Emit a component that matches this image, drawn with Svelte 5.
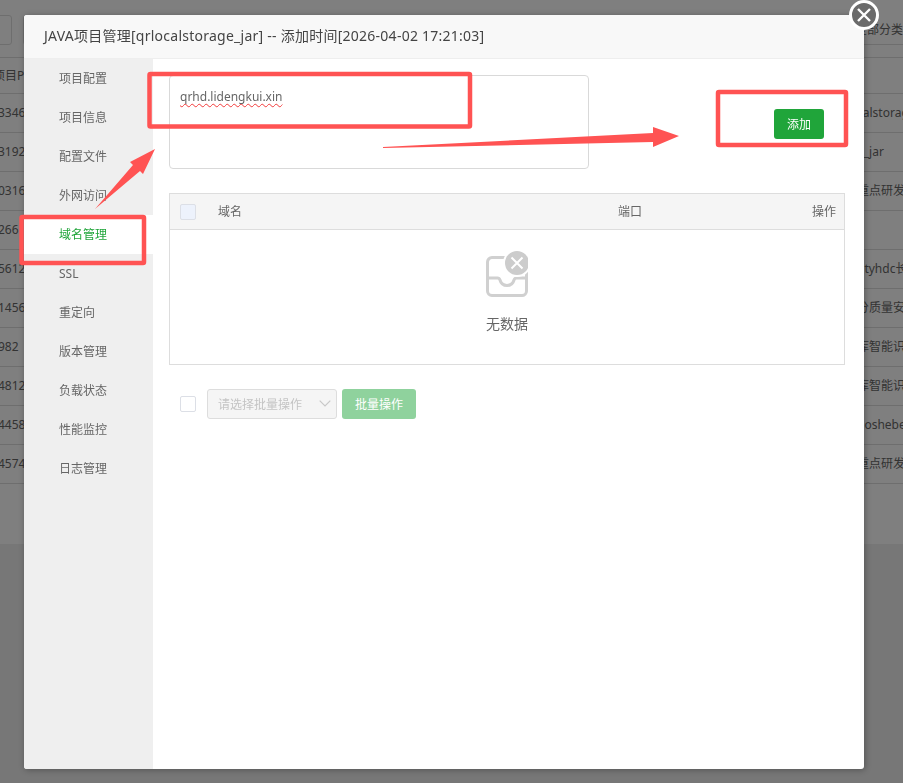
<script>
  const tabs = ["项目配置", "项目信息", "配置文件", "外网访问", "域名管理", "SSL", "重定向", "版本管理", "负载状态", "性能监控", "日志管理"];
  const activeTab = "域名管理";

  // table behind the modal, only the edges show
  const rows = [
    { pid: "项目PID", name: "", head: true },
    { pid: "3346", name: "calstorage_jar" },
    { pid: "3192", name: "e_jar" },
    { pid: "0316", name: "重点研发计划" },
    { pid: "266", name: "" },
    { pid: "5612", name: "htyhdc长治" },
    { pid: "1456", name: "分质量安全" },
    { pid: "982", name: "库智能识别" },
    { pid: "4812", name: "库智能识别" },
    { pid: "4458", name: "boshebei" },
    { pid: "4574", name: "重点研发计划" },
  ];
</script>

<div class="page">
  <div class="toolbar">
    <div class="tool-left">
      <span class="tool-box first"></span>
      <span class="tool-box"></span>
    </div>
    <div class="tool-right">全部分类</div>
  </div>

  <div class="bg-table">
    {#each rows as row}
      <div class="bg-row" class:head={row.head}>
        <span class="bg-pid" class:shift={row.head}>{row.pid}</span>
        <span class="bg-name">{row.name}</span>
      </div>
    {/each}
  </div>
  <div class="bg-pager"></div>
  <div class="bg-foot"></div>
</div>

<div class="shade"></div>

<div class="modal">
  <div class="modal-title">JAVA项目管理[qrlocalstorage_jar] -- 添加时间[2026-04-02 17:21:03]</div>
  <div class="modal-body">
    <nav class="side">
      {#each tabs as tab}
        <div class="side-item" class:active={tab === activeTab}>{tab}</div>
      {/each}
    </nav>

    <main class="content">
      <div class="add-row">
        <div class="domain-input"><span class="typed">qrhd.lidengkui.xin</span></div>
        <button class="btn add-btn">添加</button>
      </div>

      <div class="table">
        <div class="table-head">
          <span class="check disabled"></span>
          <span class="col-domain">域名</span>
          <span class="col-port">端口</span>
          <span class="col-op">操作</span>
        </div>
        <div class="empty">
          <svg class="empty-icon" width="42" height="46" viewBox="0 0 42 46" aria-hidden="true">
            <path d="M28 6.500H6a4.500 4.500 0 0 0-4.500 4.500V40a4.500 4.500 0 0 0 4.500 4.500h30a4.500 4.500 0 0 0 4.500-4.500V20" fill="none" stroke="#d0d0d0" stroke-width="3"/>
            <path d="M1.500 27h10c1.500 0 2 .6 2.500 2 .8 3 3.500 5.500 7 5.500s6.200-2.500 7-5.500c.5-1.400 1-2 2.500-2h10" fill="none" stroke="#d0d0d0" stroke-width="3"/>
            <circle cx="31" cy="12" r="14" fill="#fff"/>
            <circle cx="31" cy="12" r="12" fill="#cccccc"/>
            <path d="M25.500 6.500l11 11M36.500 6.500l-11 11" stroke="#fff" stroke-width="2" fill="none"/>
          </svg>
          <div class="empty-text">无数据</div>
        </div>
      </div>

      <div class="batch">
        <span class="check"></span>
        <div class="batch-select">
          <span>请选择批量操作</span>
          <svg class="chevron" width="12" height="7" viewBox="0 0 12 7" aria-hidden="true">
            <path d="M.7.7l5.300 5.300 5.300-5.300" fill="none" stroke="#c8c8c8" stroke-width="1.200"/>
          </svg>
        </div>
        <button class="btn batch-btn">批量操作</button>
      </div>
    </main>
  </div>
</div>

<button class="close" aria-label="关闭">
  <svg width="16" height="16" viewBox="0 0 16 16" aria-hidden="true">
    <path d="M2 2l12 12M14 2L2 14" stroke="#fff" stroke-width="2.400" fill="none"/>
  </svg>
</button>

<!-- red annotations drawn on top of the screenshot -->
<svg class="marks" width="903" height="783" viewBox="0 0 903 783" aria-hidden="true">
  <g fill="none" stroke="#ff5353" stroke-width="4.500" stroke-linejoin="round">
    <rect x="149.500" y="74" width="320.500" height="52.500" rx="1"/>
    <rect x="718" y="92" width="128" height="53" rx="1"/>
    <rect x="21.500" y="217" width="122.500" height="46" rx="1"/>
  </g>
  <g fill="#ff5353">
    <polygon points="95,209 133,165 130,162 155,149 143,174 140,171"/>
    <polygon points="383,147 653,133 653,127 679,136 653,147 653,142 383,148"/>
  </g>
</svg>

<style>
  :global(body) {
    margin: 0;
    background: #fff;
    font-family: "Noto Sans", "Noto Sans CJK SC", sans-serif;
    overflow: hidden;
  }

  /* page behind the modal */
  .page {
    height: 783px;
    overflow: hidden;
    display: flex;
    flex-direction: column;
    color: #666;
    font-size: 12px;
  }
  .toolbar {
    display: flex;
    justify-content: space-between;
    height: 30px;
    margin-top: 15px;
    flex-shrink: 0;
  }
  .tool-left {
    display: flex;
    gap: 11px;
    margin-left: -20px;
  }
  .tool-box {
    width: 30px;
    height: 28px;
    border: 1px solid #ddd;
    border-radius: 3px;
  }
  .tool-right {
    width: 48px;
    line-height: 30px;
    white-space: nowrap;
    overflow: hidden;
    border-bottom: 1px solid #ddd;
    box-sizing: border-box;
  }
  .bg-table {
    margin-top: 12px;
    border-top: 1px solid #ddd;
    flex-shrink: 0;
  }
  .bg-row {
    display: flex;
    justify-content: space-between;
    height: 38px;
    line-height: 38px;
    border-bottom: 1px solid #ddd;
    white-space: nowrap;
  }
  .bg-row.head {
    height: 35px;
    line-height: 35px;
  }
  .bg-pid {
    width: 40px;
    margin-left: -2px;
  }
  .bg-pid.shift {
    margin-left: -7px;
  }
  .bg-name {
    width: 46px;
    overflow: hidden;
  }
  .bg-pager {
    height: 60px;
    flex-shrink: 0;
  }
  .bg-foot {
    flex: 1;
    background: #efefef;
  }
  .shade {
    position: fixed;
    inset: 0;
    background: rgba(0, 0, 0, 0.5);
  }

  /* modal */
  .modal {
    position: absolute;
    left: 24px;
    top: 15px;
    width: 840px;
    height: 754px;
    display: flex;
    flex-direction: column;
    background: #fff;
    border-radius: 3px;
    overflow: hidden;
    box-shadow: 1px 1px 6px rgba(0, 0, 0, 0.3);
    color: #555;
  }
  .modal-title {
    height: 43px;
    line-height: 42px;
    padding-left: 20px;
    background: #f8f8f8;
    border-bottom: 1px solid #eee;
    font-size: 14px;
    letter-spacing: 0.25px;
    color: #444;
    white-space: nowrap;
    flex-shrink: 0;
  }
  .modal-body {
    flex: 1;
    display: flex;
    min-height: 0;
  }
  .side {
    width: 129px;
    background: #efefef;
    flex-shrink: 0;
  }
  .side-item {
    height: 39px;
    line-height: 39px;
    padding-left: 35px;
    font-size: 12px;
    color: #666;
  }
  .side-item.active {
    background: #fff;
    color: #20a53a;
  }
  .content {
    flex: 1;
    padding: 16px 19px 0 16px;
    min-width: 0;
  }
  .add-row {
    display: flex;
    justify-content: space-between;
    align-items: center;
  }
  .domain-input {
    width: 420px;
    height: 94px;
    box-sizing: border-box;
    padding: 12px 10px;
    border: 1px solid #d9d9d9;
    border-radius: 4px;
    font-size: 12px;
    line-height: 18px;
    color: #666;
  }
  .typed {
    text-decoration: underline wavy #f23b3b 1px;
    text-decoration-skip-ink: none;
    text-underline-offset: 2px;
  }
  .btn {
    height: 30px;
    border: 0;
    border-radius: 3px;
    color: #fff;
    font-family: inherit;
    font-size: 12px;
    padding: 0;
  }
  .add-btn {
    width: 50px;
    margin-right: 21px;
    margin-top: 4px;
    background: #20a53a;
  }
  .table {
    margin-top: 24px;
    border: 1px solid #ddd;
    font-size: 12px;
    color: #666;
  }
  .table-head {
    display: flex;
    align-items: center;
    height: 36px;
    padding: 0 8px 2px 10px;
    box-sizing: border-box;
    background: #f5f5f5;
    border-bottom: 1px solid #ddd;
  }
  .table-head .check {
    margin-top: 2px;
  }
  .check {
    width: 14px;
    height: 14px;
    border: 1px solid #dcdfe6;
    border-radius: 2px;
    background: #fff;
    flex-shrink: 0;
  }
  .check.disabled {
    background: #edf2fc;
  }
  .col-domain {
    margin-left: 22px;
    width: 400px;
  }
  .col-port {
    flex: 1;
  }
  .empty {
    height: 134px;
    display: flex;
    flex-direction: column;
    align-items: center;
  }
  .empty-icon {
    margin-top: 21px;
  }
  .empty-text {
    margin-top: 17px;
    font-size: 14px;
    line-height: 20px;
  }
  .batch {
    display: flex;
    align-items: center;
    margin-top: 24px;
    padding-left: 11px;
  }
  .batch-select {
    display: flex;
    align-items: center;
    justify-content: space-between;
    width: 130px;
    height: 30px;
    box-sizing: border-box;
    margin-left: 11px;
    padding: 0 5px 0 10px;
    border: 1px solid #ddd;
    border-radius: 3px;
    background: #f5f5f5;
    color: #c4c4c4;
    font-size: 12px;
  }
  .chevron {
    margin-bottom: 2px;
  }
  .batch-btn {
    width: 74px;
    margin-left: 5px;
    background: #8fd29d;
  }

  .close {
    position: absolute;
    left: 849px;
    top: 0;
    width: 30px;
    height: 30px;
    padding: 0;
    box-sizing: border-box;
    display: flex;
    align-items: center;
    justify-content: center;
    border: 3px solid #fff;
    border-radius: 50%;
    background: #6b6b6b;
  }
  .marks {
    position: absolute;
    left: 0;
    top: 0;
    pointer-events: none;
  }
</style>
